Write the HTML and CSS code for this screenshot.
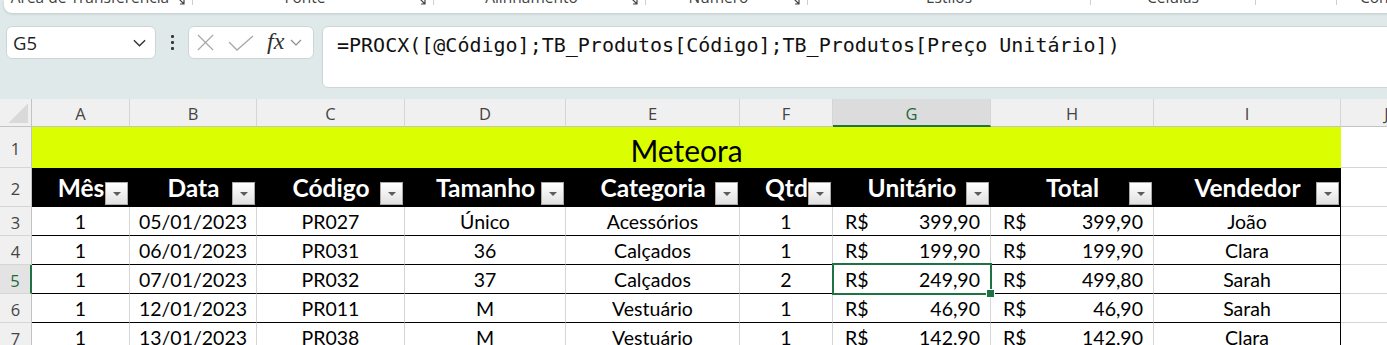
FILE: index.html
```html
<!DOCTYPE html>
<html lang="pt-BR">
<head>
<meta charset="utf-8">
<title>Meteora</title>
<link rel="stylesheet" href="styles.css">
</head>
<body>
<div class="ribbon">
  <div class="group g1"><span class="glabel">Área de Transferência</span><svg class="launch" viewBox="0 0 9 9"><path d="M1 4V1h3M2.5 2.5l5 5M8 4v4H4" /></svg></div>
  <div class="sep"></div>
  <div class="group g2"><span class="glabel">Fonte</span><svg class="launch" viewBox="0 0 9 9"><path d="M1 4V1h3M2.5 2.5l5 5M8 4v4H4" /></svg></div>
  <div class="sep"></div>
  <div class="group g3"><span class="glabel">Alinhamento</span><svg class="launch" viewBox="0 0 9 9"><path d="M1 4V1h3M2.5 2.5l5 5M8 4v4H4" /></svg></div>
  <div class="sep"></div>
  <div class="group g4"><span class="glabel">Número</span><svg class="launch" viewBox="0 0 9 9"><path d="M1 4V1h3M2.5 2.5l5 5M8 4v4H4" /></svg></div>
  <div class="sep"></div>
  <div class="group g5"><span class="glabel">Estilos</span></div>
  <div class="sep"></div>
  <div class="group g6"><span class="glabel">Células</span></div>
  <div class="sep"></div>
  <div class="group g7"><span class="glabel"></span></div>
  <div class="sep"></div>
  <div class="group g8"><span class="glabel left">Conteúdo</span></div>
</div>

<div class="fbar">
  <div class="namebox">
    <span>G5</span>
    <svg class="nb-chev" viewBox="0 0 14 8"><polyline points="1,1 7,7 13,1" /></svg>
  </div>
  <div class="dots"><i></i><i></i><i></i></div>
  <div class="fxbox">
    <svg class="ico-x" viewBox="0 0 18 18"><path d="M1 1L17 17M17 1L1 17" /></svg>
    <svg class="ico-ok" viewBox="0 0 26 16"><polyline points="1,7 9,15 25,1" /></svg>
    <span class="fx">fx</span>
    <svg class="fx-chev" viewBox="0 0 12 7"><polyline points="1,1 6,6 11,1" /></svg>
  </div>
  <div class="formula">=PROCX([@Código];TB_Produtos[Código];TB_Produtos[Preço Unitário])</div>
</div>

<div class="sheet">
  <div class="ch corner"><span class="tri"></span></div>
  <div class="ch">A</div>
  <div class="ch">B</div>
  <div class="ch">C</div>
  <div class="ch">D</div>
  <div class="ch">E</div>
  <div class="ch">F</div>
  <div class="ch sel">G</div>
  <div class="ch">H</div>
  <div class="ch">I</div>
  <div class="ch">J</div>

  <div class="rh">1</div>
  <div class="title">Meteora</div>
  <div class="j"></div>

  <div class="rh">2</div>
  <div class="hc"><span>Mês</span><span class="fb"><i></i></span></div>
  <div class="hc"><span>Data</span><span class="fb"><i></i></span></div>
  <div class="hc"><span>Código</span><span class="fb"><i></i></span></div>
  <div class="hc"><span>Tamanho</span><span class="fb"><i></i></span></div>
  <div class="hc"><span>Categoria</span><span class="fb"><i></i></span></div>
  <div class="hc"><span>Qtd</span><span class="fb"><i></i></span></div>
  <div class="hc"><span>Unitário</span><span class="fb"><i></i></span></div>
  <div class="hc"><span>Total</span><span class="fb"><i></i></span></div>
  <div class="hc"><span>Vendedor</span><span class="fb"><i></i></span></div>
  <div class="j"></div>

  <div class="rh">3</div>
  <div class="c">1</div><div class="c">05/01/2023</div><div class="c">PR027</div><div class="c">Único</div><div class="c">Acessórios</div><div class="c">1</div>
  <div class="c acc"><span>R$</span><span>399,90</span></div><div class="c acc"><span>R$</span><span>399,90</span></div><div class="c last">João</div>
  <div class="j"></div>

  <div class="rh">4</div>
  <div class="c">1</div><div class="c">06/01/2023</div><div class="c">PR031</div><div class="c">36</div><div class="c">Calçados</div><div class="c">1</div>
  <div class="c acc"><span>R$</span><span>199,90</span></div><div class="c acc"><span>R$</span><span>199,90</span></div><div class="c last">Clara</div>
  <div class="j"></div>

  <div class="rh sel">5</div>
  <div class="c">1</div><div class="c">07/01/2023</div><div class="c">PR032</div><div class="c">37</div><div class="c">Calçados</div><div class="c">2</div>
  <div class="c acc active"><span>R$</span><span>249,90</span></div><div class="c acc"><span>R$</span><span>499,80</span></div><div class="c last">Sarah</div>
  <div class="j"></div>

  <div class="rh">6</div>
  <div class="c">1</div><div class="c">12/01/2023</div><div class="c">PR011</div><div class="c">M</div><div class="c">Vestuário</div><div class="c">1</div>
  <div class="c acc"><span>R$</span><span>46,90</span></div><div class="c acc"><span>R$</span><span>46,90</span></div><div class="c last">Sarah</div>
  <div class="j"></div>

  <div class="rh">7</div>
  <div class="c">1</div><div class="c">13/01/2023</div><div class="c">PR038</div><div class="c">M</div><div class="c">Vestuário</div><div class="c">1</div>
  <div class="c acc"><span>R$</span><span>142,90</span></div><div class="c acc"><span>R$</span><span>142,90</span></div><div class="c last">Clara</div>
  <div class="j"></div>
</div>
</body>
</html>
```

FILE: styles.css
```css
* { box-sizing: border-box; }
html, body { margin: 0; padding: 0; }
body {
  width: 1387px;
  height: 345px;
  overflow: hidden;
  background: #dfe9e9;
  font-family: "Open Sans", "Noto Sans", sans-serif;
}

/* ---------- ribbon strip ---------- */
.ribbon {
  display: flex;
  height: 13px;
  margin-left: 4px;
  margin-right: -20px;
  background: #fff;
  border-radius: 0 0 8px 8px;
  box-shadow: 0 1px 3px rgba(0, 0, 0, 0.14);
  overflow: hidden;
}
.group { display: flex; align-items: flex-start; height: 13px; flex: none; }
.g1 { width: 188px; }
.g2 { width: 240px; }
.g3 { width: 211px; }
.g4 { width: 161px; }
.g5 { width: 282px; }
.g6 { width: 164px; }
.g7 { width: 80px; }
.g8 { flex: 1; }
.glabel {
  flex: 1;
  text-align: center;
  font-size: 15.5px;
  line-height: 18px;
  margin-top: -12px;
  color: #424242;
  white-space: nowrap;
}
.glabel.left { text-align: left; padding-left: 23px; }
.launch {
  width: 9px;
  height: 9px;
  margin: -4px 7px 0 0;
  flex: none;
  fill: none;
  stroke: #444;
  stroke-width: 1.2;
}
.sep { width: 1px; height: 5px; background: #cfcfcf; flex: none; }

/* ---------- formula bar ---------- */
.fbar {
  display: flex;
  align-items: flex-start;
  margin-top: 13px;
  padding-left: 6px;
  height: 62px;
  margin-right: -20px;
}
.namebox {
  width: 150px;
  height: 33px;
  background: #fff;
  border: 1px solid #cdd6d6;
  border-radius: 6px;
  display: flex;
  align-items: center;
  justify-content: space-between;
  padding: 0 9px 0 6px;
  font-size: 18.5px;
  color: #1f1f1f;
}
.nb-chev { width: 13px; height: 8px; fill: none; stroke: #333; stroke-width: 1.5; }
.dots {
  width: 32px;
  height: 33px;
  display: flex;
  flex-direction: column;
  align-items: center;
  justify-content: center;
  gap: 3px;
}
.dots i { display: block; width: 3px; height: 3px; background: #3a3a3a; border-radius: 1px; }
.fxbox {
  width: 126px;
  height: 33px;
  background: #fff;
  border: 1px solid #cdd6d6;
  border-radius: 6px;
  display: flex;
  align-items: center;
  padding-left: 8px;
}
.ico-x { width: 17px; height: 17px; fill: none; stroke: #a8a8a8; stroke-width: 1.3; }
.ico-ok { width: 26px; height: 16px; margin-left: 14px; fill: none; stroke: #a8a8a8; stroke-width: 1.3; }
.fx {
  margin-left: 13px;
  font-family: "Liberation Serif", "DejaVu Serif", serif;
  font-style: italic;
  font-size: 24px;
  line-height: 1;
  color: #303030;
  margin-top: -3px;
}
.fx-chev { width: 12px; height: 7px; margin-left: 6px; fill: none; stroke: #8a8a8a; stroke-width: 1.2; }
.formula {
  flex: 1;
  margin-left: 8px;
  height: 62px;
  background: #fff;
  border: 1px solid #cdd6d6;
  border-radius: 6px;
  padding: 5px 0 0 14px;
  font-family: "DejaVu Sans Mono", "Liberation Mono", monospace;
  font-size: 20px;
  line-height: 26px;
  color: #111;
  white-space: nowrap;
}

/* ---------- sheet grid ---------- */
.sheet {
  display: grid;
  grid-template-columns: 32px 98px 127px 148px 161px 174px 93px 158px 163px 187px 92px;
  grid-template-rows: 28px 41px 39px repeat(5, 29px);
  margin-top: 11px;
  background: #fff;
  font-family: Lato, "Open Sans", sans-serif;
}
.ch {
  background: #f0f0f0;
  border-right: 1px solid #d5d5d5;
  border-bottom: 1px solid #c3c3c3;
  display: flex;
  align-items: center;
  justify-content: center;
  padding-top: 2px;
  font-family: "Open Sans", "Noto Sans", sans-serif;
  font-size: 16.5px;
  color: #444;
}
.ch.sel {
  background: #dcdcdc;
  border-bottom: 2px solid #1f7244;
  color: #1f6a40;
}
.corner {
  justify-content: flex-end;
  align-items: flex-end;
  padding: 0 3px 3px 0;
  border-right-color: #c3c3c3;
}
.tri {
  width: 20px;
  height: 20px;
  background: linear-gradient(to bottom right, transparent 50%, #d9d9d9 50%);
}
.rh {
  background: #f0f0f0;
  border-right: 1px solid #c3c3c3;
  border-bottom: 1px solid #d5d5d5;
  display: flex;
  align-items: center;
  justify-content: center;
  padding-top: 3px;
  font-family: "Open Sans", "Noto Sans", sans-serif;
  font-size: 16.5px;
  color: #444;
}
.rh.sel {
  background: #e3e3e3;
  border-right: 2px solid #1f7244;
  color: #1f6a40;
}

.title {
  grid-column: 2 / 11;
  background: #dbff00;
  display: flex;
  justify-content: center;
  align-items: flex-end;
  font-size: 30px;
  line-height: 36px;
  color: #000;
}
.j {
  background: #fff;
  border-bottom: 1px solid #d5d5d5;
}

.hc {
  background: #000;
  color: #fff;
  font-weight: 700;
  font-size: 24.5px;
  display: grid;
  grid-template-areas: "s";
  white-space: nowrap;
}
.hc > span:first-child { grid-area: s; place-self: center; }
.fb {
  grid-area: s;
  place-self: end end;
  margin: 0 2px 2px 0;
  width: 23px;
  height: 23px;
  border: 1px solid #a9a9a9;
  background: linear-gradient(#ffffff, #e1e1e1);
  display: flex;
  align-items: center;
  justify-content: center;
}
.fb i {
  display: block;
  width: 0;
  height: 0;
  border-left: 4px solid transparent;
  border-right: 4px solid transparent;
  border-top: 4px solid #5c5c5c;
  margin-top: 1px;
}

.c {
  border-right: 1px solid #d5d5d5;
  border-bottom: 1px solid #000;
  display: flex;
  align-items: center;
  justify-content: center;
  font-size: 19.5px;
  color: #000;
  white-space: nowrap;
}
.c.last { border-right-color: #000; }
.c.acc { justify-content: space-between; padding: 0 10px 0 12px; }
.c.active { position: relative; }
.c.active::after {
  content: "";
  position: absolute;
  top: -2px;
  left: -1px;
  right: -2px;
  bottom: -2px;
  border: 2px solid #1f7244;
}
.c.active::before {
  content: "";
  position: absolute;
  right: -5px;
  bottom: -5px;
  width: 7px;
  height: 7px;
  background: #1f7244;
  border: 1px solid #fff;
  z-index: 2;
}
```
